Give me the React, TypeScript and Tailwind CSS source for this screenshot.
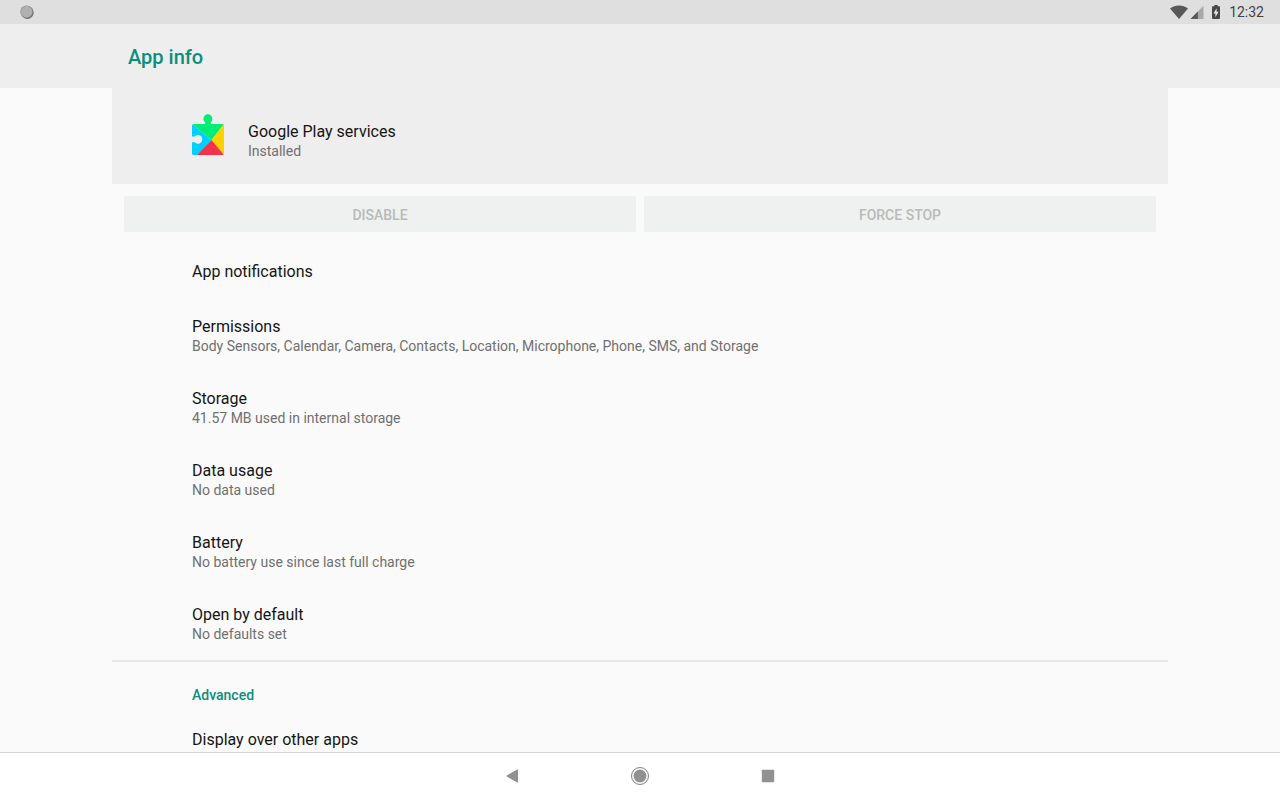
import React from 'react';

interface Setting {
  title: string;
  summary?: string;
}

const SETTINGS: Setting[] = [
  { title: 'App notifications' },
  {
    title: 'Permissions',
    summary: 'Body Sensors, Calendar, Camera, Contacts, Location, Microphone, Phone, SMS, and Storage',
  },
  { title: 'Storage', summary: '41.57 MB used in internal storage' },
  { title: 'Data usage', summary: 'No data used' },
  { title: 'Battery', summary: 'No battery use since last full charge' },
  { title: 'Open by default', summary: 'No defaults set' },
];

const ADVANCED: Setting[] = [{ title: 'Display over other apps' }];

function StatusBar() {
  return (
    <div className="flex h-6 shrink-0 items-center bg-[#dfdfdf] px-4 text-[#424242]">
      <svg width="22" height="24" viewBox="0 0 22 24">
        <circle cx="11.4" cy="12.6" r="6.3" fill="#6e6e6e" />
        <circle cx="10.6" cy="11.7" r="6.3" fill="#8c8c8c" />
        <circle cx="10.6" cy="11.7" r="5.6" fill="#b0b0b0" />
      </svg>
      <div className="ml-auto flex items-center">
        <svg width="18" height="24" viewBox="0 0 18 24" fill="#585858">
          <path d="M0 8.4C5 4.5 13 4.5 18 8.4L9 19z" />
        </svg>
        <svg className="ml-0.5" width="14" height="24" viewBox="0 0 14 24">
          <path d="M13.5 5.8V19H0.5z" fill="#a8a8a8" />
          <path d="M7.8 11.6V19H0.5z" fill="#585858" />
        </svg>
        <svg className="ml-2" width="8" height="24" viewBox="0 0 8 24">
          <path
            d="M2.4 5h3.2v1.3H7a1 1 0 0 1 1 1V18a1 1 0 0 1-1 1H1a1 1 0 0 1-1-1V7.3a1 1 0 0 1 1-1h1.4z"
            fill="#484848"
          />
          <path d="M4.6 8.2v3.5h1.9L3.4 17.3v-3.9H1.5z" fill="#e8e8e8" />
        </svg>
        <span className="ml-[9px] text-sm">12:32</span>
      </div>
    </div>
  );
}

function PlayServicesIcon() {
  return (
    <svg className="shrink-0" width="32" height="44" viewBox="0 0 32 44">
      <path
        d="M0.4 10.4Q0.8 10 1.5 10H13.2V8.4A4.5 4.5 0 1 1 18.6 8.4V10H30.5Q31.2 10 31.6 10.4L19.5 26z"
        fill="#00ed76"
      />
      <path
        d="M0.4 10.4L19.5 26L4.7 41H1.5A1.5 1.5 0 0 1 0 39.5V28.2H2.6A4.4 4.4 0 1 0 2.6 22.4H0V11.5Q0 10.800 0.4 10.4z"
        fill="#00d0ff"
      />
      <path d="M31.6 10.4Q32 10.8 32 11.5V39.5Q32 40.200 31.6 40.6L19.5 26z" fill="#ffd000" />
      <path d="M4.7 41L19.5 26L31.6 40.6Q31.2 41 30.5 41z" fill="#f43249" />
    </svg>
  );
}

function SettingRow({ title, summary }: Setting) {
  return (
    <li>
      <button className="block w-full px-20 pt-[17px] pb-4 text-left">
        <span className="block text-base leading-[22px] text-[#151515]">{title}</span>
        {summary && (
          <span className="block pb-px text-sm leading-4 text-[#707070]">{summary}</span>
        )}
      </button>
    </li>
  );
}

function ActionButton({ label }: { label: string }) {
  return (
    <button
      disabled
      className="h-9 flex-1 rounded-xs bg-[#eff1f0] pt-0.5 text-sm font-medium text-[#b8bab9] uppercase"
    >
      {label}
    </button>
  );
}

function NavBar() {
  return (
    <nav className="flex h-12 shrink-0 items-center justify-center gap-20 border-t border-[#d6d6d6] bg-white pb-px">
      <button aria-label="Back" className="flex size-12 items-center justify-center">
        <svg width="20" height="20" viewBox="0 0 20 20">
          <path d="M4.8 10L15.5 3.8V16.2z" fill="#919191" stroke="#919191" strokeLinejoin="round" />
        </svg>
      </button>
      <button aria-label="Home" className="flex size-12 items-center justify-center">
        <svg width="20" height="20" viewBox="0 0 20 20">
          <circle cx="10" cy="10" r="8.5" fill="none" stroke="#808080" />
          <circle cx="10" cy="10" r="6.4" fill="#919191" />
        </svg>
      </button>
      <button aria-label="Overview" className="flex size-12 items-center justify-center">
        <svg width="20" height="20" viewBox="0 0 20 20">
          <rect x="3.8" y="3.8" width="12.4" height="12.4" rx="0.6" fill="#919191" />
        </svg>
      </button>
    </nav>
  );
}

export default function App() {
  return (
    <div className="flex h-screen flex-col bg-[#fafafa] font-['Roboto',sans-serif]">
      <StatusBar />

      <header className="shrink-0 bg-[#eeeeee]">
        <div className="mx-auto flex h-16 max-w-[1056px] items-center px-4 pt-0.5">
          <h1 className="text-xl font-medium text-[#0a8f7e]">App info</h1>
        </div>
      </header>

      <main className="min-h-0 flex-1 overflow-hidden">
        <div className="mx-auto max-w-[1056px]">
          {/* App header */}
          <section className="flex h-24 items-center gap-6 bg-[#eeeeee] px-20">
            <PlayServicesIcon />
            <div className="pt-2">
              <h2 className="text-base leading-[22px] text-[#151515]">Google Play services</h2>
              <p className="text-sm leading-4 text-[#707070]">Installed</p>
            </div>
          </section>

          <div className="flex gap-2 p-3">
            <ActionButton label="Disable" />
            <ActionButton label="Force stop" />
          </div>

          <ul className="pb-px">
            {SETTINGS.map(s => (
              <SettingRow key={s.title} {...s} />
            ))}
          </ul>

          {/* Advanced */}
          <section className="border-t-2 border-[#e6e6e6]">
            <h3 className="px-20 pt-[23px] pb-[7px] text-sm font-medium text-[#0a8f7e]">Advanced</h3>
            <ul>
              {ADVANCED.map(s => (
                <SettingRow key={s.title} {...s} />
              ))}
            </ul>
          </section>
        </div>
      </main>

      <NavBar />
    </div>
  );
}
